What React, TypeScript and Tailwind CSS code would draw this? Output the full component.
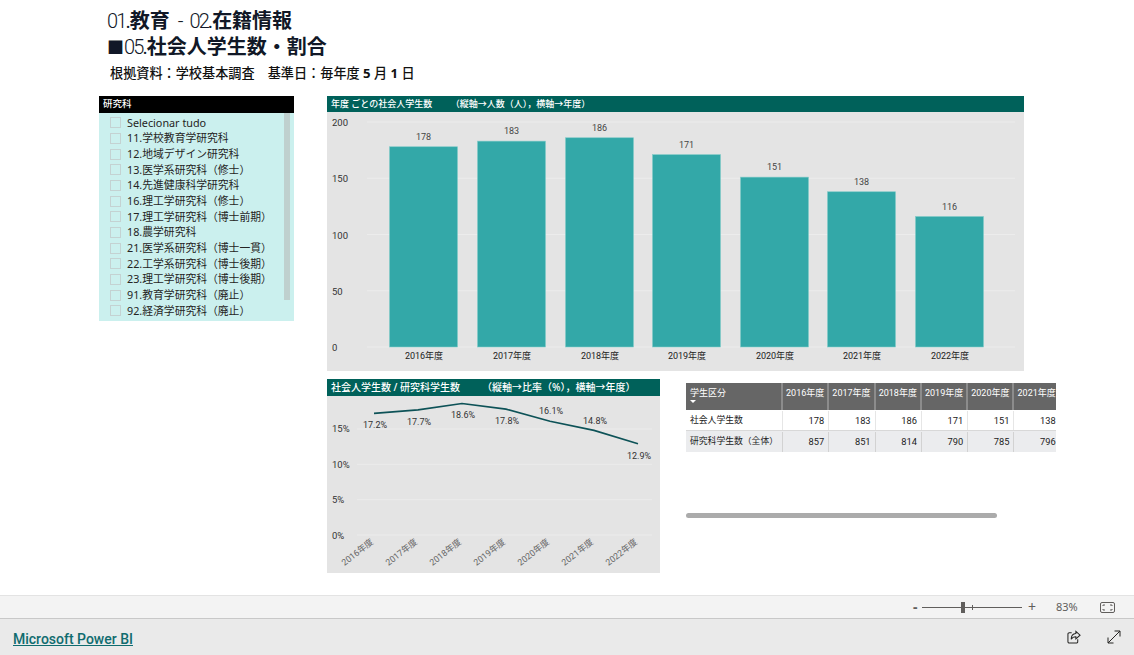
const font = { fontFamily: '"Noto Sans","Noto Sans CJK JP",sans-serif' };
const roboto = { fontFamily: 'Roboto,"Noto Sans CJK JP",sans-serif' };

const items = [
  "Selecionar tudo", "11.学校教育学研究科", "12.地域デザイン研究科", "13.医学系研究科（修士）", "14.先進健康科学研究科",
  "16.理工学研究科（修士）", "17.理工学研究科（博士前期）", "18.農学研究科", "21.医学系研究科（博士一貫）",
  "22.工学系研究科（博士後期）", "23.理工学研究科（博士後期）", "91.教育学研究科（廃止）", "92.経済学研究科（廃止）",
];
const years = ["2016年度", "2017年度", "2018年度", "2019年度", "2020年度", "2021年度", "2022年度"];
const counts = [178, 183, 186, 171, 151, 138, 116];
const labelFont = 'Roboto,"Noto Sans CJK JP",sans-serif';

function BarChart() {
  const xs = [62, 150, 238, 325, 413, 500, 588];
  const y0 = 235;
  return (
    <svg width="697" height="259" className="block">
      {[0, 50, 100, 150, 200].map((v) => (
        <g key={v}>
          <line x1="40" x2="688" y1={y0 - v * 1.125} y2={y0 - v * 1.125} stroke="#ececec" />
          <text x="5" y={y0 - v * 1.125 + 4} fontSize="9.5" fill="#333" fontFamily={labelFont}>{v}</text>
        </g>
      ))}
      {counts.map((c, i) => (
        <g key={i}>
          <rect x={xs[i] + 0.5} y={y0 - c * 1.125} width="68" height={c * 1.125} fill="#33a8a8" stroke="#82cbc9" strokeWidth="0.6" />
          <text x={xs[i] + 34.5} y={y0 - c * 1.125 - 7} textAnchor="middle" fontSize="9" fill="#444" fontFamily={labelFont}>{c}</text>
          <text x={xs[i] + 35} y={y0 + 12} textAnchor="middle" fontSize="9" fill="#222" fontFamily={labelFont}>{years[i]}</text>
        </g>
      ))}
    </svg>
  );
}

function LineChart() {
  const vals = [17.2, 17.7, 18.6, 17.8, 16.1, 14.8, 12.9];
  const labelY = [29, 26, 19, 25, 15, 25, 60];
  const y = (v: number) => 139 - v * 7.07;
  const x = (i: number) => 47 + i * 44;
  return (
    <svg width="333" height="177" className="block">
      {[0, 5, 10, 15].map((v) => (
        <g key={v}>
          <line x1="30" x2="325" y1={y(v)} y2={y(v)} stroke="#ececec" />
          <text x="5" y={y(v) + 3.5} fontSize="9.5" fill="#333" fontFamily={labelFont}>{v}%</text>
        </g>
      ))}
      <polyline points={vals.map((v, i) => `${x(i)},${y(v)}`).join(" ")} fill="none" stroke="#0d5257" strokeWidth="1.6" />
      {vals.map((v, i) => (
        <text key={i} x={x(i) + 1} y={labelY[i] + 3} textAnchor="middle" fontSize="9" fill="#333" fontFamily={labelFont}>{v.toFixed(1)}%</text>
      ))}
      {years.map((t, i) => (
        <text key={t} x={x(i)} y="147" textAnchor="end" fontSize="8.8" fill="#666" fontFamily={labelFont} transform={`rotate(-38 ${x(i)} 147)`}>{t}</text>
      ))}
    </svg>
  );
}

const rows = [
  { name: "社会人学生数", v: [178, 183, 186, 171, 151, 138], bg: "bg-white border-b border-[#d8d8d8]", line: "border-[#e6e6e6]" },
  { name: "研究科学生数（全体）", v: [857, 851, 814, 790, 785, 796], bg: "bg-[#ebecee]", line: "border-[#d2d2d2]" },
];

function DataTable() {
  return (
    <div className="w-[370px] overflow-hidden mt-[4px]" style={roboto}>
      <div className="flex w-[420px] h-[27px] bg-[#666666] text-white text-[9px]">
        <div className="w-[97px] pl-[4px] pt-[4px] border-r-2 border-[#8c8c8c] relative">
          学生区分
          <span className="absolute left-[4px] top-[17px] w-0 h-0 border-l-[3px] border-r-[3px] border-t-[3px] border-l-transparent border-r-transparent border-t-white" />
        </div>
        {years.slice(0, 6).map((t) => (
          <div key={t} className="w-[46.3px] shrink-0 pr-[3px] pt-[4px] text-right border-r-2 border-[#8c8c8c]">{t}</div>
        ))}
      </div>
      {rows.map((r) => (
        <div key={r.name} className={`flex w-[420px] h-[21px] pt-[1px] items-center text-[9.3px] text-[#222] ${r.bg}`}>
          <div className={`w-[97px] h-full pl-[4px] flex items-center border-r whitespace-nowrap text-[8.8px] ${r.line}`}>{r.name}</div>
          {r.v.map((n, i) => (
            <div key={i} className={`w-[46.3px] h-full shrink-0 pr-[4px] flex items-center justify-end border-r ${r.line}`}>{n}</div>
          ))}
        </div>
      ))}
      <div className="mt-[61px] w-[311px] h-[5px] rounded-full bg-[#ababab]" />
    </div>
  );
}

function L({ children }: { children: string }) {
  return (
    <span className="font-light tracking-[-1.9px] [word-spacing:5px]" style={roboto}>
      {children}
      <span className="font-normal tracking-[-1px]">.</span>
    </span>
  );
}

export default function App() {
  return (
    <div className="h-[655px] w-[1134px] overflow-hidden bg-white flex flex-col" style={font}>
      <div className="flex-1 min-h-0">
        <div className="pl-[107px] pt-[8px] text-[#111827] text-[20px] leading-[26px] h-[62px] whitespace-pre">
          <div><L>01</L><b className="font-bold">教育</b><L> - 02</L><b className="font-bold">在籍情報</b></div>
          <div className="flex items-baseline"><span className="text-[17px]">■</span><L>05</L><b className="font-bold">社会人学生数・割合</b></div>
        </div>
        <div className="pl-[110px] pt-[2px] text-[13.15px] leading-[18px] font-medium text-[#111] h-[34px] whitespace-pre">根拠資料：学校基本調査　基準日：毎年度 <b>5</b> 月 <b>1</b> 日</div>
        <div className="flex pl-[99px] gap-[33px]">
          <div className="w-[195px] h-[225px] bg-[#cbf0ee] flex flex-col">
            <div className="h-[17px] bg-black text-white text-[9.5px] font-medium pl-[4px] leading-[16px]">研究科</div>
            <div className="relative pt-[2px]">
              {items.map((t) => (
                <div key={t} className="h-[15.67px] flex items-center pl-[11px] gap-[6px] text-[10.8px] text-[#252423] whitespace-nowrap">
                  <span className="w-[11px] h-[11px] border border-[#c4d2d2] shrink-0" />
                  {t}
                </div>
              ))}
              <div className="absolute right-[4px] top-0 w-[6px] h-[187px] bg-[#bfd0ce]" />
            </div>
          </div>
          <div className="flex flex-col gap-[8px]">
            <div className="w-[697px] h-[275px] bg-[#e4e4e4]">
              <div className="h-[16px] bg-[#00615a] text-white text-[9px] font-medium pl-[4px] leading-[15px] whitespace-pre">年度 ごとの社会人学生数　　<span className="ml-[5px]">（縦軸→人数（人），横軸→年度）</span></div>
              <BarChart />
            </div>
            <div className="flex gap-[26px]">
              <div className="w-[333px] h-[194px] bg-[#e4e4e4]">
                <div className="h-[17px] bg-[#00615a] text-white text-[10px] font-medium pl-[4px] leading-[16px] whitespace-pre">社会人学生数 / 研究科学生数　　<span className="ml-[7px]">（縦軸→比率（%），横軸→年度）</span></div>
                <LineChart />
              </div>
              <DataTable />
            </div>
          </div>
        </div>
      </div>
      <div className="h-[24px] bg-[#f3f3f3] border-t border-b border-t-[#e3e3e3] border-b-[#c8c8c8] flex items-center text-[#605e5c] shrink-0">
        <span className="ml-[913px] w-[5px] text-[14px] font-bold leading-none">-</span>
        <div className="relative w-[100px] h-[11px] ml-[4px] flex items-center">
          <div className="w-full h-px bg-[#605e5c]" />
          <span className="absolute left-[39px] top-0 w-[4px] h-[11px] bg-[#605e5c]" />
          <span className="absolute left-[50px] top-[3px] w-px h-[5px] bg-[#605e5c]" />
        </div>
        <span className="ml-[6px] text-[14px] leading-none">+</span>
        <span className="ml-[20px] text-[11px]">83%</span>
        <svg width="15" height="11" viewBox="0 0 15 11" className="ml-[22px]" fill="none" stroke="#605e5c">
          <rect x="0.5" y="0.5" width="14" height="10" rx="1.5" />
          <path d="M3 4V3H5M10 3H12V4M12 7V8H10M5 8H3V7" />
        </svg>
      </div>
      <div className="h-[36px] bg-[#eaeaea] flex items-center justify-between shrink-0 pl-[13px] pr-[13px]">
        <a className="text-[14px] font-medium text-[#106c6f] underline relative top-[2px]" style={roboto}>Microsoft Power BI</a>
        <div className="flex items-center gap-[26px]">
          <svg width="14" height="14" viewBox="0 0 15 15" fill="none" stroke="#252423" strokeWidth="1.1">
            <path d="M5 3H2.5A1.5 1.5 0 0 0 1 4.5V12.5A1.5 1.5 0 0 0 2.5 14H10A1.5 1.5 0 0 0 11.5 12.5V10" />
            <path d="M9.5 1.5L14 5.5L9.5 9.5V7.2C7 7.2 5.5 8 4.5 10C4.5 6.5 6.5 4 9.5 3.8Z" />
          </svg>
          <svg width="14" height="14" viewBox="0 0 14 14" fill="none" stroke="#252423" strokeWidth="1">
            <path d="M1 13L13 1M7.5 1H13V6.5M1 7.5V13H6.5" />
          </svg>
        </div>
      </div>
    </div>
  );
}
